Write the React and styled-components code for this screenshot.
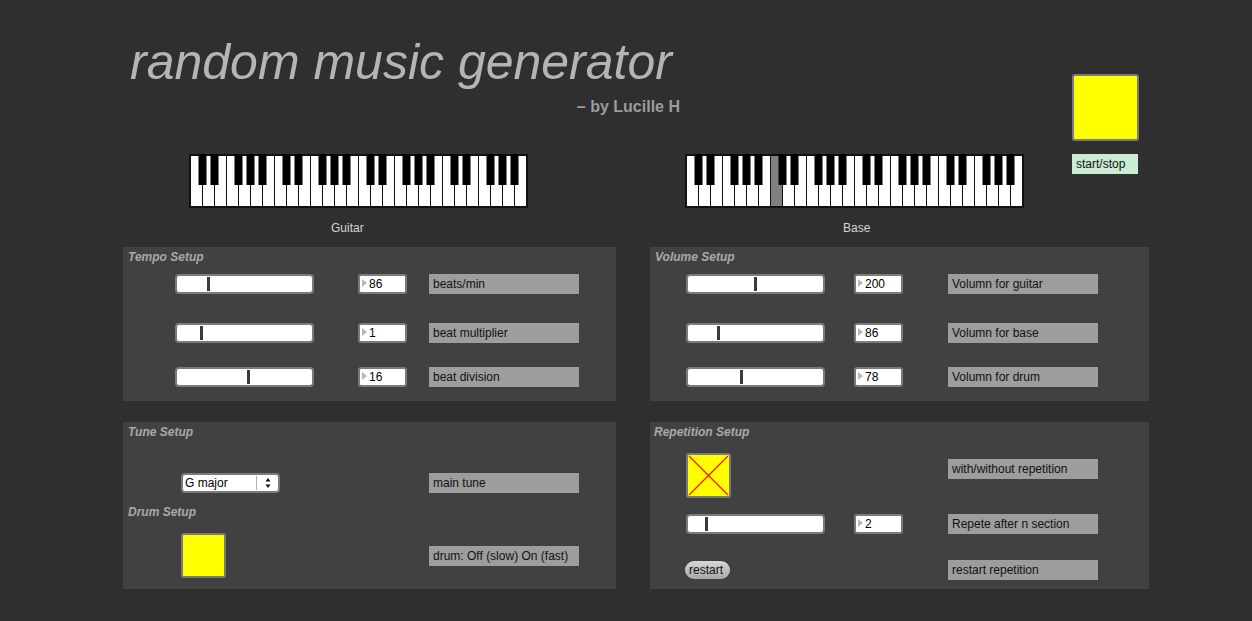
import React from "react";
import styled, { createGlobalStyle } from "styled-components";

const GlobalStyle = createGlobalStyle`
  html, body {
    margin: 0;
    padding: 0;
    background: #2f2f2f;
  }
  body {
    font-family: "Liberation Sans", Arial, sans-serif;
  }
`;

const Page = styled.div`
  width: 1252px;
  height: 621px;
  box-sizing: border-box;
  padding: 0 103px 0 123px;
  background: #2f2f2f;
  overflow: hidden;
`;

const TopSection = styled.div`
  display: flex;
  align-items: flex-start;
`;

const LeftStack = styled.div`
  flex: 1;
  display: flex;
  flex-direction: column;
`;

const TitleBlock = styled.div`
  margin-left: 5px;
  width: 552px;
  display: flex;
  flex-direction: column;
`;

const Title = styled.h1`
  margin: 37px 0 0 2px;
  font-size: 50px;
  line-height: 50px;
  font-style: italic;
  font-weight: 400;
  color: #b4b4b4;
  white-space: nowrap;
`;

const Byline = styled.div`
  margin-top: 12px;
  text-align: right;
  font-size: 16px;
  line-height: 16px;
  font-weight: 700;
  color: #9c9c9c;
`;

const KeyboardRow = styled.div`
  display: flex;
  margin-top: 39px;
`;

const KeyboardUnit = styled.div`
  display: flex;
  flex-direction: column;
  margin-left: ${(p) => p.$ml}px;
`;

const KeyLabel = styled.div`
  margin-top: 13px;
  padding-left: ${(p) => p.$pl}px;
  font-size: 12px;
  line-height: 14px;
  color: #d4d4d4;
`;

const RightStack = styled.div`
  margin: 74px 10px 0 0;
  display: flex;
  flex-direction: column;
  gap: 13px;
`;

const Toggle = styled.div`
  position: relative;
  width: ${(p) => p.$size}px;
  height: ${(p) => p.$size}px;
  box-sizing: border-box;
  border: 2px solid #7a7a7a;
  border-radius: 3px;
  background: #ffff00;
  margin-left: ${(p) => p.$ml || 0}px;
  flex-shrink: 0;
  svg {
    display: block;
  }
`;

const StartLabel = styled.div`
  width: 66px;
  height: 20px;
  box-sizing: border-box;
  padding-left: 4px;
  background: #c9ecd2;
  color: #111;
  font-size: 12px;
  line-height: 20px;
`;

const PanelGrid = styled.div`
  margin-top: 12px;
  display: grid;
  grid-template-columns: 493px 499px;
  grid-template-rows: 154px 167px;
  column-gap: 34px;
  row-gap: 21px;
`;

const Panel = styled.section`
  background: #414141;
  padding-top: 3px;
  display: flex;
  flex-direction: column;
`;

const Heading = styled.div`
  margin-top: ${(p) => p.$mt || 0}px;
  padding-left: ${(p) => p.$pl ?? 5}px;
  font-size: 12px;
  line-height: 14px;
  font-weight: 700;
  font-style: italic;
  color: #a9a9a9;
`;

const Row = styled.div`
  display: flex;
  align-items: ${(p) => p.$align || "center"};
  padding-left: ${(p) => p.$pad}px;
  margin-top: ${(p) => p.$mt}px;
`;

const SliderTrack = styled.div`
  position: relative;
  width: 139px;
  height: 20px;
  box-sizing: border-box;
  background: #fff;
  border: 2px solid #7b7b7b;
  border-radius: 4px;
  flex-shrink: 0;
`;

const Knob = styled.div`
  position: absolute;
  top: 1px;
  width: 3px;
  height: 14px;
  background: #3a3a3a;
`;

const NumberBox = styled.div`
  position: relative;
  width: 49px;
  height: 20px;
  box-sizing: border-box;
  margin-left: ${(p) => p.$ml}px;
  padding-left: 9px;
  background: #fff;
  border: 2px solid #7b7b7b;
  border-radius: 3px;
  font-size: 12px;
  line-height: 16px;
  color: #000;
  flex-shrink: 0;
  &::before {
    content: "";
    position: absolute;
    left: 2px;
    top: 3px;
    border-left: 5px solid #b8b8b8;
    border-top: 4.5px solid transparent;
    border-bottom: 4.5px solid transparent;
  }
`;

const Comment = styled.div`
  width: 150px;
  height: 20px;
  box-sizing: border-box;
  margin-left: ${(p) => p.$ml}px;
  margin-top: ${(p) => p.$mt || 0}px;
  padding-left: 4px;
  background: #9d9d9d;
  color: #111;
  font-size: 12px;
  line-height: 20px;
  white-space: nowrap;
  flex-shrink: 0;
`;

const Dropdown = styled.div`
  display: flex;
  width: 99px;
  height: 20px;
  box-sizing: border-box;
  background: #fff;
  border: 2px solid #7b7b7b;
  border-radius: 4px;
  flex-shrink: 0;
`;

const DropdownText = styled.div`
  flex: 1;
  padding-left: 2px;
  font-size: 12px;
  line-height: 16px;
  color: #000;
`;

const DropdownArrows = styled.div`
  width: 21px;
  margin: 1px 0;
  border-left: 1px solid #b0b0b0;
  display: flex;
  align-items: center;
  justify-content: center;
`;

const RestartButton = styled.div`
  width: 45px;
  height: 18px;
  box-sizing: border-box;
  padding-left: 4px;
  border-radius: 9px;
  background: linear-gradient(#d8d8d8, #a6a6a6);
  color: #111;
  font-size: 12px;
  line-height: 18px;
`;

const WHITE_COUNT = 28;
const BLACK_AFTER = [0, 1, 3, 4, 5];

const Keyboard = ({ active }) => {
  const whites = [];
  const blacks = [];
  for (let i = 0; i < WHITE_COUNT; i++) {
    whites.push(
      <rect key={i} x={2 + i * 12} y={2} width={11} height={50} fill={i === active ? "#808080" : "#fff"} />
    );
    if (i < WHITE_COUNT - 1 && BLACK_AFTER.includes(i % 7)) {
      const b = 2 + (i + 1) * 12 - 0.5;
      blacks.push(<rect key={"b" + i} x={b - 4} y={0} width={8} height={31} fill="#000" />);
    }
  }
  return (
    <svg width="339" height="54" viewBox="0 0 339 54" style={{ display: "block" }}>
      <rect x="0" y="0" width="339" height="54" fill="#111" />
      {whites}
      {blacks}
    </svg>
  );
};

const Slider = ({ at }) => (
  <SliderTrack>
    <Knob style={{ left: at - 3.5 }} />
  </SliderTrack>
);

const Number = ({ value, ml }) => <NumberBox $ml={ml}>{value}</NumberBox>;

const tempoRows = [
  { mt: 10, knob: 33, value: "86", label: "beats/min" },
  { mt: 29, knob: 26, value: "1", label: "beat multiplier" },
  { mt: 24, knob: 73, value: "16", label: "beat division" },
];

const volumeRows = [
  { mt: 10, knob: 69, value: "200", label: "Volumn for guitar" },
  { mt: 29, knob: 32, value: "86", label: "Volumn for base" },
  { mt: 24, knob: 55, value: "78", label: "Volumn for drum" },
];

export default function App() {
  return (
    <Page>
      <GlobalStyle />
      <TopSection>
        <LeftStack>
          <TitleBlock>
            <Title>random music generator</Title>
            <Byline>– by Lucille H</Byline>
          </TitleBlock>
          <KeyboardRow>
            <KeyboardUnit $ml={66}>
              <Keyboard active={-1} />
              <KeyLabel $pl={142}>Guitar</KeyLabel>
            </KeyboardUnit>
            <KeyboardUnit $ml={157}>
              <Keyboard active={7} />
              <KeyLabel $pl={158}>Base</KeyLabel>
            </KeyboardUnit>
          </KeyboardRow>
        </LeftStack>
        <RightStack>
          <Toggle $size={67} />
          <StartLabel>start/stop</StartLabel>
        </RightStack>
      </TopSection>

      <PanelGrid>
        <Panel>
          <Heading>Tempo Setup</Heading>
          {tempoRows.map((r) => (
            <Row key={r.label} $pad={52} $mt={r.mt}>
              <Slider at={r.knob} />
              <Number value={r.value} ml={44} />
              <Comment $ml={22}>{r.label}</Comment>
            </Row>
          ))}
        </Panel>

        <Panel>
          <Heading>Volume Setup</Heading>
          {volumeRows.map((r) => (
            <Row key={r.label} $pad={36} $mt={r.mt}>
              <Slider at={r.knob} />
              <Number value={r.value} ml={29} />
              <Comment $ml={45}>{r.label}</Comment>
            </Row>
          ))}
        </Panel>

        <Panel>
          <Heading>Tune Setup</Heading>
          <Row $pad={58} $mt={34}>
            <Dropdown>
              <DropdownText>G major</DropdownText>
              <DropdownArrows>
                <svg width="6" height="12" viewBox="0 0 6 12">
                  <path d="M3 1 L5.5 4.5 L0.5 4.5 Z" fill="#111" />
                  <path d="M3 11 L5.5 7.5 L0.5 7.5 Z" fill="#111" />
                </svg>
              </DropdownArrows>
            </Dropdown>
            <Comment $ml={149}>main tune</Comment>
          </Row>
          <Heading $mt={12}>Drum Setup</Heading>
          <Row $pad={58} $mt={14}>
            <Toggle $size={45} />
            <Comment $ml={203}>drum: Off (slow) On (fast)</Comment>
          </Row>
        </Panel>

        <Panel>
          <Heading $pl={4}>Repetition Setup</Heading>
          <Row $pad={36} $mt={14} $align="flex-start">
            <Toggle $size={45}>
              <svg width="41" height="41" viewBox="0 0 41 41">
                <line x1="1" y1="1" x2="40" y2="40" stroke="#ff1030" strokeWidth="1.3" />
                <line x1="40" y1="1" x2="1" y2="40" stroke="#ff1030" strokeWidth="1.3" />
              </svg>
            </Toggle>
            <Comment $ml={217} $mt={6}>with/without repetition</Comment>
          </Row>
          <Row $pad={36} $mt={16}>
            <Slider at={20} />
            <Number value="2" ml={29} />
            <Comment $ml={45}>Repete after n section</Comment>
          </Row>
          <Row $pad={35} $mt={26}>
            <RestartButton>restart</RestartButton>
            <Comment $ml={218}>restart repetition</Comment>
          </Row>
        </Panel>
      </PanelGrid>
    </Page>
  );
}
